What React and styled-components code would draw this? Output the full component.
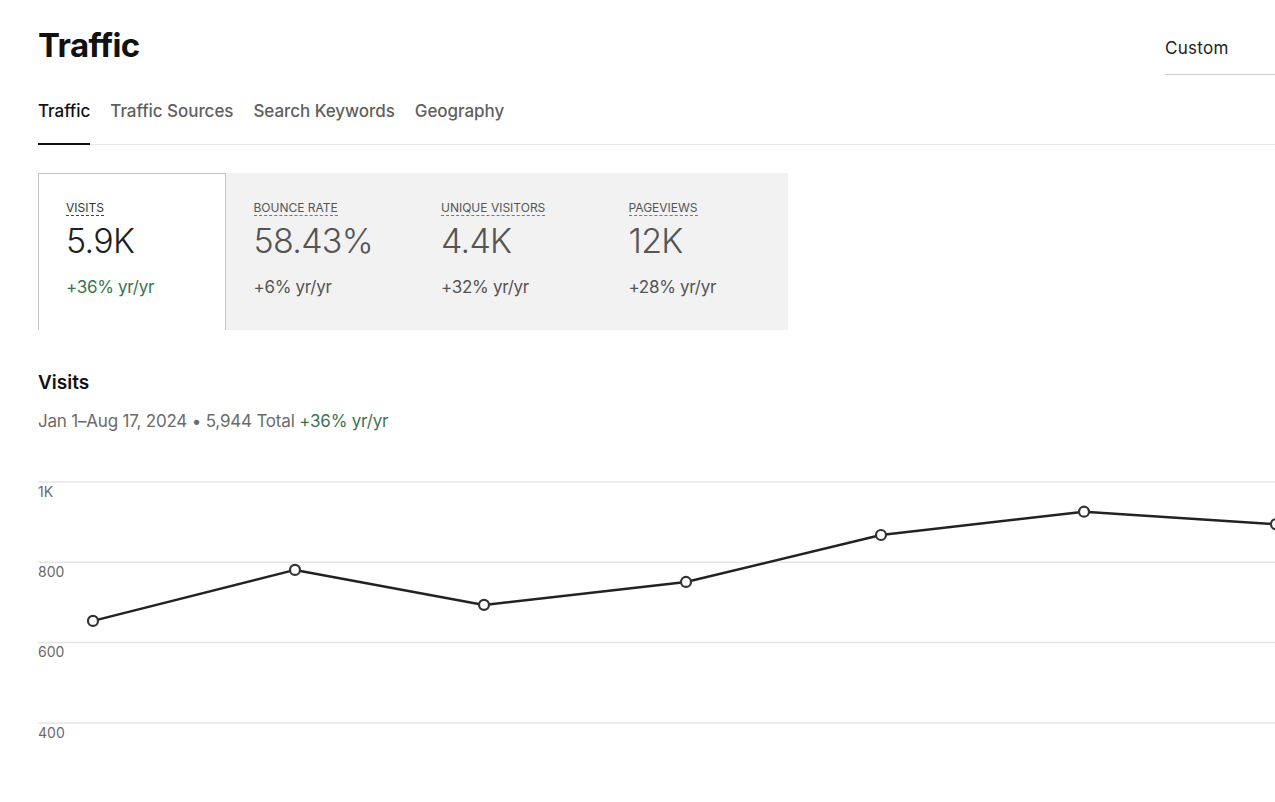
import React from "react";
import styled, { createGlobalStyle } from "styled-components";

const GlobalStyle = createGlobalStyle`
  html, body { margin: 0; padding: 0; background: #fff; overflow: hidden; }
  body { font-family: Inter, "Noto Sans", "Liberation Sans", sans-serif; color: #111; }
  * { box-sizing: border-box; }
`;

const Page = styled.div`
  width: 1275px;
  padding-left: 38px;
  overflow: hidden;
`;

const Header = styled.header`
  display: flex;
  justify-content: space-between;
  align-items: flex-start;
`;

const Title = styled.h1`
  margin: 25px 0 0;
  font-size: 33px;
  line-height: 40px;
  font-weight: 700;
  letter-spacing: -0.6px;
  color: #111;
`;

const RangeSelect = styled.div`
  margin-top: 36px;
  width: 110px;
  padding-bottom: 14px;
  border-bottom: 1px solid #cfcfcf;
  font-size: 17px;
  line-height: 24px;
  letter-spacing: 0.3px;
  color: #222;
`;

const TabList = styled.nav`
  display: flex;
  gap: 20px;
  margin-top: 24px;
  border-bottom: 1px solid #e6e6e6;
`;

const Tab = styled.div`
  padding-bottom: 20px;
  margin-bottom: -1px;
  font-size: 17px;
  line-height: 24px;
  font-weight: 500;
  letter-spacing: -0.05px;
  color: ${(p) => (p.$active ? "#111" : "#5f5f5f")};
  border-bottom: 2px solid ${(p) => (p.$active ? "#111" : "transparent")};
`;

const StatPanel = styled.section`
  display: flex;
  width: 750px;
  height: 157px;
  margin-top: 28px;
  background: #f2f2f2;
`;

const StatCard = styled.div`
  width: 187.5px;
  padding: 26px 0 0 27px;
  background: ${(p) => (p.$active ? "#fff" : "transparent")};
  border: 1px solid ${(p) => (p.$active ? "#c6c6c6" : "transparent")};
  border-bottom: none;
  display: flex;
  flex-direction: column;
  align-items: flex-start;
`;

const StatLabel = styled.span`
  font-size: 12px;
  line-height: 15px;
  color: ${(p) => (p.$active ? "#333" : "#555")};
  border-bottom: 1px dashed ${(p) => (p.$active ? "#444" : "#777")};
`;

const StatValue = styled.div`
  margin-top: 4px;
  font-size: 34px;
  line-height: 42px;
  font-weight: 300;
  letter-spacing: -0.7px;
  color: ${(p) => (p.$active ? "#1f1f1f" : "#555")};
`;

const StatChange = styled.div`
  margin-top: 13px;
  font-size: 17px;
  line-height: 24px;
  letter-spacing: -0.3px;
  color: ${(p) => (p.$active ? "#3b7452" : "#555")};
`;

const SectionTitle = styled.h2`
  margin: 41px 0 0;
  font-size: 19px;
  line-height: 24px;
  font-weight: 600;
  color: #111;
`;

const Subtitle = styled.p`
  margin: 14px 0 0;
  font-size: 17px;
  line-height: 24px;
  letter-spacing: -0.2px;
  color: #6b6b6b;
`;

const Positive = styled.span`
  color: #3b7452;
`;

const ChartWrap = styled.div`
  margin-top: 37px;
  width: 1237px;
  height: 300px;
  overflow: hidden;
`;

const AxisLabel = styled.text`
  font-family: Inter, "Noto Sans", sans-serif;
  font-size: 14px;
  fill: #6a6a6a;
`;

const tabs = ["Traffic", "Traffic Sources", "Search Keywords", "Geography"];

const stats = [
  { label: "VISITS", value: "5.9K", change: "+36% yr/yr", active: true },
  { label: "BOUNCE RATE", value: "58.43%", change: "+6% yr/yr" },
  { label: "UNIQUE VISITORS", value: "4.4K", change: "+32% yr/yr" },
  { label: "PAGEVIEWS", value: "12K", change: "+28% yr/yr" },
];

const points = [
  { x: 55, v: 654 },
  { x: 257, v: 781 },
  { x: 446, v: 694 },
  { x: 648, v: 751 },
  { x: 843, v: 868 },
  { x: 1046, v: 926 },
  { x: 1238, v: 895 },
];

const ticks = [1000, 800, 600, 400];
const yOf = (v) => 12 + (1000 - v) * 0.4015;

function VisitsChart() {
  const d = points.map((p, i) => `${i ? "L" : "M"}${p.x} ${yOf(p.v).toFixed(1)}`).join(" ");
  return (
    <ChartWrap>
      <svg width="1250" height="300" viewBox="0 0 1250 300">
        {ticks.map((t) => (
          <g key={t}>
            <line x1="0" x2="1250" y1={yOf(t)} y2={yOf(t)} stroke="#e6e6e6" strokeWidth="1.5" />
            <AxisLabel x="0" y={yOf(t) + 14.7}>
              {t === 1000 ? "1K" : t}
            </AxisLabel>
          </g>
        ))}
        <path d={d} fill="none" stroke="#222" strokeWidth="2.5" strokeLinejoin="round" />
        {points.map((p) => (
          <circle key={p.x} cx={p.x} cy={yOf(p.v)} r="5" fill="#fff" stroke="#333" strokeWidth="2.2" />
        ))}
      </svg>
    </ChartWrap>
  );
}

export default function App() {
  return (
    <>
      <GlobalStyle />
      <Page>
        <Header>
          <Title>Traffic</Title>
          <RangeSelect>Custom</RangeSelect>
        </Header>
        <TabList>
          {tabs.map((t, i) => (
            <Tab key={t} $active={i === 0}>
              {t}
            </Tab>
          ))}
        </TabList>
        <StatPanel>
          {stats.map((s) => (
            <StatCard key={s.label} $active={s.active}>
              <StatLabel $active={s.active}>{s.label}</StatLabel>
              <StatValue $active={s.active}>{s.value}</StatValue>
              <StatChange $active={s.active}>{s.change}</StatChange>
            </StatCard>
          ))}
        </StatPanel>
        <SectionTitle>Visits</SectionTitle>
        <Subtitle>
          Jan 1–Aug 17, 2024 • 5,944 Total <Positive>+36% yr/yr</Positive>
        </Subtitle>
        <VisitsChart />
      </Page>
    </>
  );
}
